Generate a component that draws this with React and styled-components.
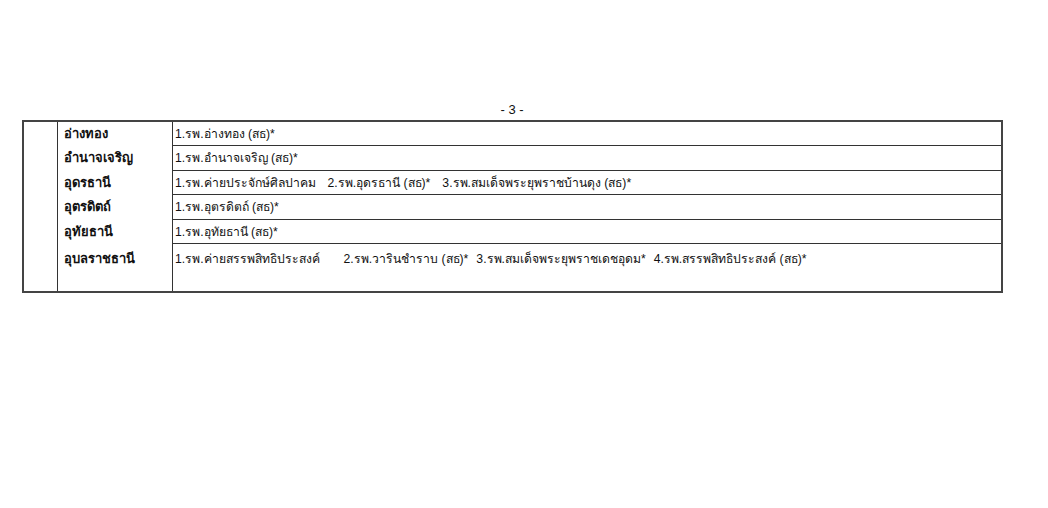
import React from "react";
import styled, { createGlobalStyle } from "styled-components";

const GlobalStyle = createGlobalStyle`
  body {
    margin: 0;
    background: #ffffff;
    font-family: Tahoma, "Liberation Sans", "DejaVu Sans", sans-serif;
    color: #111;
  }
`;

const Page = styled.div`
  width: 1048px;
  height: 508px;
  padding: 101px 0 0 22px;
  box-sizing: border-box;
`;

const PageNumber = styled.div`
  width: 980px;
  text-align: center;
  font-size: 13px;
  line-height: 18px;
  height: 19px;
`;

const Table = styled.table`
  width: 981px;
  border-collapse: collapse;
  border: 2px solid #444;
  font-size: 13px;
  table-layout: fixed;
`;

const NumCell = styled.td`
  width: 33px;
  border-right: 1px solid #333;
  padding: 0;
`;

const NameCell = styled.td`
  width: 108px;
  padding: 0 0 0 6px;
  font-weight: bold;
  vertical-align: ${(p) => (p.$top ? "top" : "middle")};
  padding-top: ${(p) => (p.$top ? "5px" : "0")};
  border-right: 1px solid #333;
`;

const HospCell = styled.td`
  padding: 0 0 0 2px;
  border-top: 1px solid #333;
  white-space: pre;
  font-size: 12.2px;
  vertical-align: ${(p) => (p.$top ? "top" : "middle")};
  padding-top: ${(p) => (p.$top ? "5px" : "0")};
`;

const Item = styled.span`
  display: inline-block;
  margin-right: ${(p) => p.$gap || 10}px;
`;

const Row = styled.tr`
  height: ${(p) => p.$h}px;
`;

const rows = [
  { name: "อ่างทอง", items: ["1.รพ.อ่างทอง (สธ)*"], h: 24 },
  { name: "อำนาจเจริญ", items: ["1.รพ.อำนาจเจริญ (สธ)*"], h: 25 },
  {
    name: "อุดรธานี",
    items: ["1.รพ.ค่ายประจักษ์ศิลปาคม", "2.รพ.อุดรธานี (สธ)*", "3.รพ.สมเด็จพระยุพราชบ้านดุง (สธ)*"],
    gaps: [12, 12],
    h: 24,
  },
  { name: "อุตรดิตถ์", items: ["1.รพ.อุตรดิตถ์ (สธ)*"], h: 25 },
  { name: "อุทัยธานี", items: ["1.รพ.อุทัยธานี (สธ)*"], h: 24 },
  {
    name: "อุบลราชธานี",
    items: ["1.รพ.ค่ายสรรพสิทธิประสงค์", "2.รพ.วารินชำราบ (สธ)*", "3.รพ.สมเด็จพระยุพราชเดชอุดม*", "4.รพ.สรรพสิทธิประสงค์ (สธ)*"],
    gaps: [24, 8, 8],
    h: 49,
    top: true,
  },
];

const App = () => {
  return (
    <Page>
      <GlobalStyle />
      <PageNumber>- 3 -</PageNumber>
      <Table>
        <tbody>
          {rows.map((r, i) => (
            <Row key={i} $h={r.h}>
              {i === 0 && <NumCell rowSpan={rows.length} />}
              <NameCell $top={r.top}>{r.name}</NameCell>
              <HospCell $top={r.top}>
                {r.items.map((t, j) => (
                  <Item key={j} $gap={r.gaps ? r.gaps[j] : 0}>
                    {t}
                  </Item>
                ))}
              </HospCell>
            </Row>
          ))}
        </tbody>
      </Table>
    </Page>
  );
};

export default App;
